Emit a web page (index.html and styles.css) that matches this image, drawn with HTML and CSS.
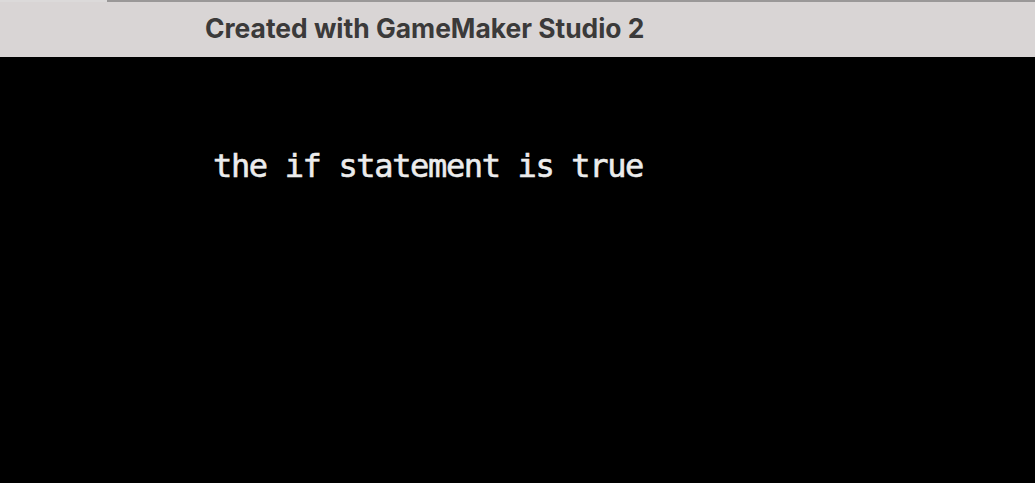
FILE: index.html
```html
<!DOCTYPE html>
<html>
<head>
<meta charset="utf-8">
<link rel="stylesheet" href="styles.css">
</head>
<body>
<div class="window">
  <div class="titlebar">
    <div class="topline"><span class="topline-left"></span><span class="topline-right"></span></div>
    <div class="title">Created with GameMaker Studio 2</div>
  </div>
  <div class="canvas">
    <div class="game-text">the if statement is true</div>
  </div>
</div>
</body>
</html>
```
FILE: styles.css
```css
html, body {
  margin: 0;
  padding: 0;
  width: 1035px;
  height: 483px;
  overflow: hidden;
  background: #000;
}
.window {
  display: flex;
  flex-direction: column;
  height: 483px;
}
.titlebar {
  height: 57px;
  background: #d9d5d5;
  display: flex;
  flex-direction: column;
}
.topline {
  display: flex;
  height: 2px;
}
.topline-left {
  width: 107px;
  background: #dcdada;
}
.topline-right {
  flex: 1;
  background: #9a9898;
}
.title {
  padding-left: 205px;
  padding-top: 9px;
  font-family: "Inter", "Liberation Sans", sans-serif;
  font-weight: 700;
  font-size: 26.4px;
  line-height: 34px;
  color: #3b3a3a;
}
.canvas {
  flex: 1;
  background: #000;
  padding-left: 213px;
  padding-top: 89px;
}
.game-text {
  font-family: "DejaVu Sans Mono", monospace;
  font-weight: 400;
  font-size: 32px;
  letter-spacing: -1.35px;
  line-height: 40px;
  color: #ececec;
  white-space: pre;
  -webkit-text-stroke: 0.6px #ececec;
}
```
